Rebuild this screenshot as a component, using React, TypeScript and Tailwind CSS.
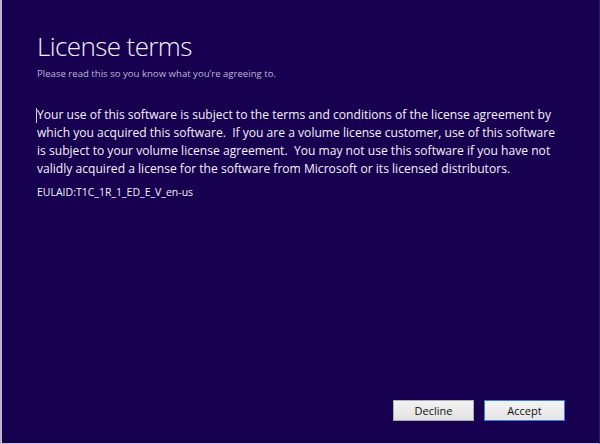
export default function App() {
  const lines = [
    "Your use of this software is subject to the terms and conditions of the license agreement by",
    "which you acquired this software.  If you are a volume license customer, use of this software",
    "is subject to your volume license agreement.  You may not use this software if you have not",
    "validly acquired a license for the software from Microsoft or its licensed distributors.",
  ];

  return (
    <div
      className="flex h-[444px] w-[600px] flex-col border-b border-l-2 border-r border-b-[#c8c8d8] border-l-[#b8b8cc] border-r-[#2a1a6a] bg-[#16004f] text-white"
      style={{ fontFamily: '"Open Sans", "Noto Sans", sans-serif' }}
    >
      <div className="px-[35px] pt-[28px]">
        <h1 className="text-[26px] font-light leading-[36px] tracking-[-0.6px] text-[#f2f0fa]">
          License terms
        </h1>
        <p className="mt-[3px] text-[9.6px] leading-[14px] text-[#bdb6dc]">
          Please read this so you know what you&rsquo;re agreeing to.
        </p>
      </div>

      <div className="px-[35px] pt-[25px]">
        <div className="relative text-[12.1px] leading-[18px] text-[#f4f2fb] whitespace-pre">
          <span className="absolute left-[-1px] top-[2px] h-[15px] w-px bg-[#d0cce8]" />
          {lines.map((l) => (
            <div key={l}>{l}</div>
          ))}
        </div>
        <div className="mt-[6px] text-[10.5px] leading-[16px] text-[#f4f2fb]">
          EULAID:T1C_1R_1_ED_E_V_en-us
        </div>
      </div>

      <div className="flex-1" />

      <div className="flex justify-end gap-[10px] pb-[22px] pr-[34px]">
        <button className="h-[21px] w-[81px] border border-[#adadad] bg-gradient-to-b from-[#f2f2f2] to-[#e2e2e2] text-[11px] leading-none text-[#111]">
          Decline
        </button>
        <button className="h-[21px] w-[81px] border border-[#3c7fd6] bg-gradient-to-b from-[#f4f4f4] to-[#e4e4e4] text-[11px] leading-none text-[#111]">
          Accept
        </button>
      </div>
    </div>
  );
}
